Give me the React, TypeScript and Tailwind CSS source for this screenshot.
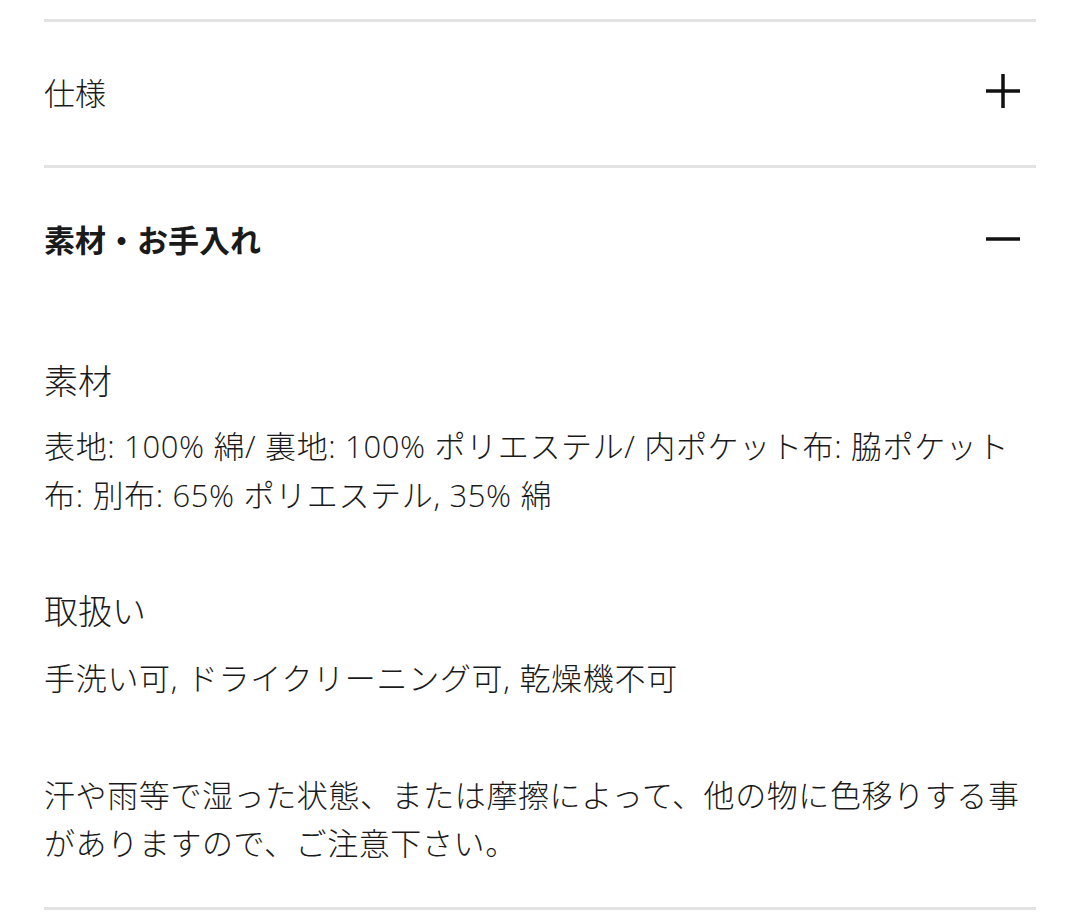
import React from "react";

const font = { fontFamily: '"Noto Sans CJK JP", "Noto Sans", sans-serif' };
const bodyFont = { fontFamily: '"Open Sans", "Noto Sans CJK JP", sans-serif' };

function PlusIcon() {
  return (
    <svg width="34" height="34" viewBox="0 0 34 34" aria-hidden="true">
      <line x1="0" y1="17" x2="34" y2="17" stroke="#111" strokeWidth="3.5" />
      <line x1="17" y1="0" x2="17" y2="34" stroke="#111" strokeWidth="3.5" />
    </svg>
  );
}

function MinusIcon() {
  return (
    <svg width="34" height="34" viewBox="0 0 34 34" aria-hidden="true">
      <line x1="0" y1="17" x2="34" y2="17" stroke="#111" strokeWidth="3.5" />
    </svg>
  );
}

function Divider() {
  return <div className="h-[3px] bg-[#e3e3e3]" />;
}

export default function App() {
  return (
    <div className="w-[1080px] h-[917px] bg-white overflow-hidden text-[#1a1a1a]" style={font}>
      <div className="px-[44px] pt-[19px]">
        <Divider />
        <div className="h-[143px] pb-[5px] flex items-center justify-between">
          <span className="text-[31px] leading-none font-light">仕様</span>
          <span className="pr-[16px] flex"><PlusIcon /></span>
        </div>
        <Divider />
        <div className="h-[143px] pb-[2px] flex items-center justify-between">
          <span className="text-[31px] leading-none font-bold">素材・お手入れ</span>
          <span className="pr-[16px] flex"><MinusIcon /></span>
        </div>

        <div className="mt-[45px]">
          <h3 className="text-[34px] leading-[48px] font-light">素材</h3>
          <p
            className="mt-[18px] text-[31px] leading-[49px] whitespace-nowrap font-light tracking-[0.65px]"
            style={bodyFont}
          >
            表地: 100% 綿/ 裏地: 100% ポリエステル/ 内ポケット布: 脇ポケット
            <br />
            布: 別布: 65% ポリエステル, 35% 綿
          </p>
        </div>

        <div className="mt-[66px]">
          <h3 className="text-[34px] leading-[48px] font-light">取扱い</h3>
          <p
            className="mt-[20px] text-[31px] leading-[49px] whitespace-nowrap font-light tracking-[0.7px]"
            style={bodyFont}
          >
            手洗い可, ドライクリーニング可, 乾燥機不可
          </p>
        </div>

        <p className="mt-[67px] text-[31px] leading-[48px] whitespace-nowrap font-light tracking-[0.6px]">
          汗や雨等で湿った状態、または摩擦によって、他の物に色移りする事
          <br />
          がありますので、ご注意下さい。
        </p>

        <div className="mt-[41px]">
          <Divider />
        </div>
      </div>
    </div>
  );
}
